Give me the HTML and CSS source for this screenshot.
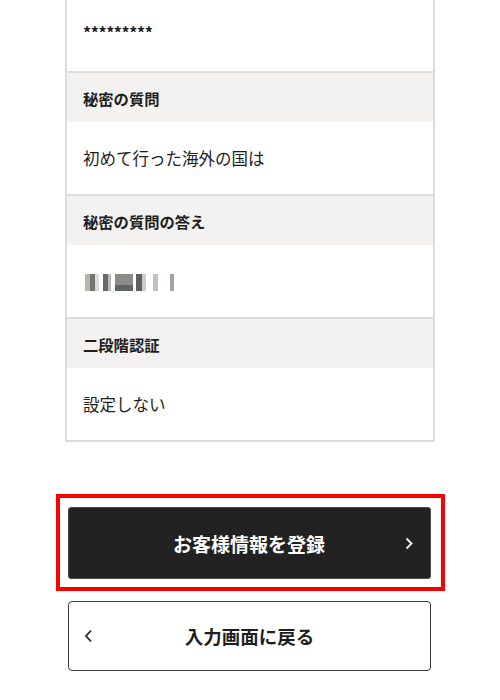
FILE: index.html
```html
<!DOCTYPE html>
<html lang="ja">
<head>
<meta charset="utf-8">
<link rel="stylesheet" href="styles.css">
</head>
<body>
<div class="page">
  <div class="card">
    <div class="value first"><span class="mask">*********</span></div>
    <div class="label">秘密の質問</div>
    <div class="value">初めて行った海外の国は</div>
    <div class="label">秘密の質問の答え</div>
    <div class="value">
      <div class="blur">
        <span class="b b1"></span><span class="b b2"></span><span class="b b3"></span><span class="b b4"></span><span class="b b5"></span><span class="b b6"></span>
      </div>
    </div>
    <div class="label">二段階認証</div>
    <div class="value">設定しない</div>
  </div>

  <div class="highlight">
    <button class="btn btn-primary">
      <span class="slot"></span>
      <span class="btn-text">お客様情報を登録</span>
      <span class="slot slot-right">
        <svg width="8" height="13" viewBox="0 0 8 13"><polyline points="1.5,1.5 6.5,6.5 1.5,11.5" fill="none" stroke="#fff" stroke-width="1.8"/></svg>
      </span>
    </button>
  </div>

  <button class="btn btn-secondary">
    <span class="slot slot-left">
      <svg width="9" height="14" viewBox="0 0 9 14"><polyline points="7,1.5 2,7 7,12.5" fill="none" stroke="#222" stroke-width="1.8"/></svg>
    </span>
    <span class="btn-text">入力画面に戻る</span>
    <span class="slot"></span>
  </button>
</div>
</body>
</html>
```

FILE: styles.css
```css
html, body {
  margin: 0;
  padding: 0;
  background: #fff;
}
body {
  font-family: "Noto Sans CJK JP", "Noto Sans", sans-serif;
  color: #222;
}
.page {
  display: flex;
  flex-direction: column;
  align-items: center;
}
.card {
  box-sizing: border-box;
  width: 370px;
  margin-top: -3px;
  border: 2px solid #dcdcdc;
  display: flex;
  flex-direction: column;
}
.label {
  height: 49px;
  display: flex;
  align-items: center;
  padding-left: 16px;
  background: #f3f2f0;
  font-size: 15.3px;
  font-weight: 700;
  color: #1e1e1e;
}
.value {
  height: 72px;
  display: flex;
  align-items: center;
  padding-left: 16px;
  font-size: 16.5px;
  color: #1e1e1e;
  border-bottom: 2px solid #dcdcdc;
}
.value:last-child {
  border-bottom: none;
}
.mask {
  font-size: 16px;
  font-weight: 700;
  letter-spacing: -0.4px;
  position: relative;
  top: -3px;
}
.blur {
  display: flex;
  align-items: stretch;
  height: 17px;
  margin-top: 2px;
}
.b { display: block; }
.b1 { width: 14px; margin-left: 2px; background: linear-gradient(90deg, #b8b4b2 0 35%, #77736f 35% 70%, #d8dde2 70%); }
.b2 { width: 8px; margin-left: 4px; background: linear-gradient(90deg, #6b6866 0 60%, #b8bcc0 60%); }
.b3 { width: 18px; margin-left: 4px; background: linear-gradient(180deg, #8e8b89 0 65%, #606468 65%); }
.b4 { width: 10px; margin-left: 3px; background: linear-gradient(90deg, #5f5f60 0 60%, #c7cbd0 60%); }
.b5 { width: 5px; margin-left: 7px; background: #c4bfb9; }
.b6 { width: 4px; margin-left: 12px; background: #a5a1a3; }

.highlight {
  box-sizing: border-box;
  width: 389px;
  margin-top: 52px;
  border: 4px solid #ff0000;
  padding: 9px 10px 8px 8px;
  display: flex;
}
.btn {
  box-sizing: border-box;
  width: 363px;
  display: grid;
  grid-template-columns: 1fr auto 1fr;
  align-items: center;
  font-family: "Noto Sans CJK JP", "Noto Sans", sans-serif;
  font-weight: 700;
  padding: 0;
  cursor: pointer;
}
.btn-primary {
  height: 72px;
  font-size: 19px;
  background: #222;
  color: #fff;
  border: 1px solid #4a4a4a;
  border-radius: 3px;
}
.btn-secondary {
  height: 70px;
  font-size: 18.5px;
  margin-top: 10px;
  margin-left: -1px;
  background: #fff;
  color: #1e1e1e;
  border: 1px solid #3a3a3a;
  border-radius: 4px;
}
.slot {
  display: flex;
  align-items: center;
}
.slot-right {
  justify-content: flex-end;
  padding-right: 17px;
}
.slot-left {
  justify-content: flex-start;
  padding-left: 15px;
}
.slot svg { display: block; }
```
